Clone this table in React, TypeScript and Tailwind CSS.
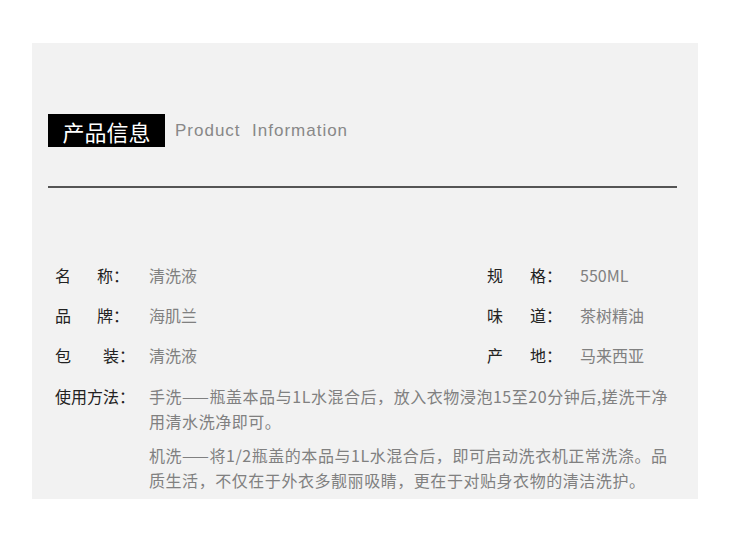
import React from "react";

const cjk = { fontFamily: '"Noto Sans CJK SC", "Noto Sans", sans-serif' };

function Label({ a, b, wide }: { a: string; b: string; wide?: boolean }) {
  return (
    <div className="flex w-[94px] shrink-0 items-center text-[16px] text-[#222]">
      <span className="w-[16px]">{a}</span>
      <span className={wide ? "ml-[32px]" : "ml-[26px]"}>{b}</span>
      <span>：</span>
    </div>
  );
}

function Row({ a, b, v, wide }: { a: string; b: string; v: string; wide?: boolean }) {
  return (
    <div className="flex h-[40px] items-center">
      <Label a={a} b={b} wide={wide} />
      <span className="text-[16px] text-[#808080]">{v}</span>
    </div>
  );
}

function RowR({ a, b, v }: { a: string; b: string; v: string }) {
  return (
    <div className="flex h-[40px] items-center">
      <div className="flex w-[93px] shrink-0 items-center text-[16px] text-[#222]">
        <span className="w-[16px]">{a}</span>
        <span className="ml-[27px]">{b}</span>
        <span>：</span>
      </div>
      <span className="text-[16px] text-[#808080]">{v}</span>
    </div>
  );
}

export default function App() {
  return (
    <div className="h-[549px] w-[730px] bg-white pt-[43px]" style={cjk}>
      <div className="ml-[32px] h-[456px] w-[666px] bg-[#f2f2f2] pt-[71px]">
        <div className="flex items-center pl-[16px]">
          <div className="flex h-[33px] w-[117px] items-center justify-center bg-black text-[22px] text-white leading-none">
            产品信息
          </div>
          <div
            className="ml-[10px] text-[17px] tracking-[1px] text-[#888]"
            style={{ fontFamily: '"Liberation Sans", Arial, sans-serif' }}
          >
            Product&nbsp; Information
          </div>
        </div>
        <div className="ml-[16px] mt-[39px] h-[2px] w-[629px] bg-[#555]" />
        <div className="mt-[67px] flex pl-[23px]">
          <div className="w-[432px]">
            <Row a="名" b="称" v="清洗液" />
            <Row a="品" b="牌" v="海肌兰" />
            <Row a="包" b="装" v="清洗液" wide />
          </div>
          <div>
            <RowR a="规" b="格" v="550ML" />
            <RowR a="味" b="道" v="茶树精油" />
            <RowR a="产" b="地" v="马来西亚" />
          </div>
        </div>
        <div className="mt-[9px] flex pl-[23px]">
          <div className="w-[94px] shrink-0 text-[16px] leading-[25px] text-[#222]">使用方法：</div>
          <div className="text-[16px] leading-[25px] tracking-[0.55px] text-[#808080] whitespace-nowrap">
            <div>手洗——瓶盖本品与1L水混合后，放入衣物浸泡15至20分钟后,搓洗干净</div>
            <div>用清水洗净即可。</div>
            <div className="mt-[9px]">机洗——将1/2瓶盖的本品与1L水混合后，即可启动洗衣机正常洗涤。品</div>
            <div>质生活，不仅在于外衣多靓丽吸睛，更在于对贴身衣物的清洁洗护。</div>
          </div>
        </div>
      </div>
    </div>
  );
}
